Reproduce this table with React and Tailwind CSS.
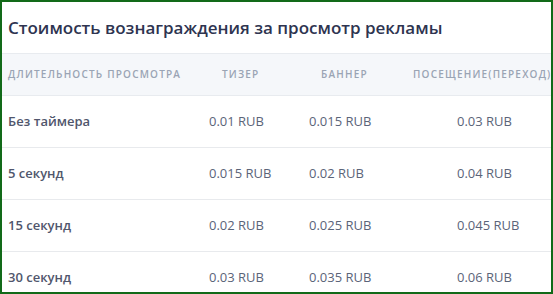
import React from 'react';

const rows = [
    { label: 'Без таймера', teaser: '0.01 RUB', banner: '0.015 RUB', visit: '0.03 RUB' },
    { label: '5 секунд', teaser: '0.015 RUB', banner: '0.02 RUB', visit: '0.04 RUB' },
    { label: '15 секунд', teaser: '0.02 RUB', banner: '0.025 RUB', visit: '0.045 RUB' },
    { label: '30 секунд', teaser: '0.03 RUB', banner: '0.035 RUB', visit: '0.06 RUB' },
];

const App = () => {
    return (
        <div className="w-[553px] h-[294px] overflow-hidden border-2 border-[#126a19] bg-white font-['Open_Sans',sans-serif]">
            <div className="h-[51px] flex items-center pl-[6px]">
                <h1 className="text-[17px] font-semibold text-[#2e3450]">
                    Стоимость вознаграждения за просмотр рекламы
                </h1>
            </div>

            <div className="w-[600px]">
                {/* table head */}
                <div className="h-[43px] grid grid-cols-[208px_100px_92px_1fr] items-center border-y border-[#e8ebef] bg-[#f5f7fa] text-[10px] font-semibold uppercase tracking-[0.12em] text-[#9aa4b4] whitespace-nowrap">
                    <div className="pl-[6px]">Длительность просмотра</div>
                    <div className="pl-[12px]">Тизер</div>
                    <div className="pl-[11px]">Баннер</div>
                    <div className="pl-[11px]">Посещение(переход)</div>
                </div>

                {/* table body */}
                {rows.map((row) => (
                    <div
                        key={row.label}
                        className="h-[52px] grid grid-cols-[201px_100px_148px_1fr] items-center border-b border-[#e8eaed] text-[13px] whitespace-nowrap"
                    >
                        <div className="pl-[6px] font-semibold text-[#50566c]">{row.label}</div>
                        <div className="pl-[6px] text-[#5b6479]">{row.teaser}</div>
                        <div className="pl-[6px] text-[#5b6479]">{row.banner}</div>
                        <div className="pl-[6px] text-[#5b6479]">{row.visit}</div>
                    </div>
                ))}
            </div>
        </div>
    );
};

export default App;
